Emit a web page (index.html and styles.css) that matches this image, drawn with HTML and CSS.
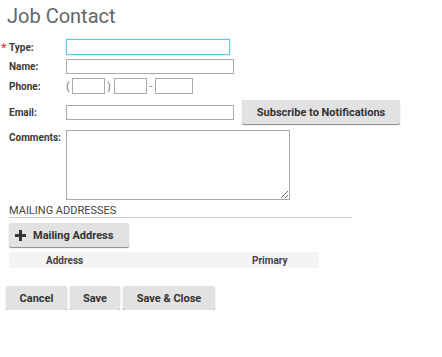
FILE: index.html
```html
<!DOCTYPE html>
<html lang="en">
<head>
  <meta charset="UTF-8" />
  <title>Job Contact</title>
  <link rel="stylesheet" href="styles.css">
</head>
<body>
  <div class="page">
    <h2 class="title">Job Contact</h2>

    <div class="form">
      <div class="row">
        <label class="required"><span class="star">*</span>Type:</label>
        <input type="text" class="field field-type focused" />
      </div>
      <div class="row">
        <label>Name:</label>
        <input type="text" class="field field-name" />
      </div>
      <div class="row">
        <label>Phone:</label>
        <div class="phone">
          <span class="paren">(</span>
          <input type="text" class="field box" />
          <span class="paren">)</span>
          <input type="text" class="field box" />
          <span class="dash">-</span>
          <input type="text" class="field box box-wide" />
        </div>
      </div>
      <div class="row row-email">
        <label>Email:</label>
        <input type="text" class="field field-name" />
        <button class="btn btn-subscribe">Subscribe to Notifications</button>
      </div>
      <div class="row row-comments">
        <label>Comments:</label>
        <textarea class="field comments"></textarea>
      </div>
    </div>

    <div class="section">
      <div class="section-title">MAILING ADDRESSES</div>
      <button class="btn btn-add">
        <svg width="11" height="11" viewBox="0 0 11 11"><path d="M4 0h3v4h4v3H7v4H4V7H0V4h4z" fill="#333"/></svg>
        Mailing Address
      </button>
      <div class="table-head">
        <span class="col-address">Address</span>
        <span class="col-primary">Primary</span>
      </div>
    </div>

    <div class="actions">
      <button class="btn btn-cancel">Cancel</button>
      <button class="btn btn-save">Save</button>
      <button class="btn btn-close">Save &amp; Close</button>
    </div>
  </div>
</body>
</html>
```

FILE: styles.css
```css
body {
  margin: 0;
  font-family: Roboto, "Liberation Sans", sans-serif;
  color: #333;
  background: #fff;
}
.page {
  padding: 4px 0 0 0;
}
.title {
  margin: 0 0 0 7px;
  font-size: 20px;
  font-weight: 400;
  color: #666;
  line-height: 24px;
}
.form {
  margin-top: 11px;
}
.row {
  display: flex;
  align-items: center;
  margin-bottom: 4px;
}
.row label {
  width: 57px;
  padding-left: 9px;
  font-size: 10px;
  font-weight: bold;
  color: #3a3a3a;
  position: relative;
}
.star {
  position: absolute;
  left: 1px;
  top: -2px;
  font-size: 13px;
  color: #d33;
  font-weight: normal;
}
.field {
  box-sizing: border-box;
  height: 16px;
  border: 1px solid #aaa;
  margin: 0;
  padding: 0 2px;
  font-family: inherit;
}
.field-type {
  width: 164px;
}
.focused {
  border-color: #5bc8e8;
  box-shadow: 0 0 2px #9fe0f4;
}
.field-name {
  width: 168px;
  height: 15px;
}
.phone {
  display: flex;
  align-items: center;
  font-size: 11px;
  color: #777;
}
.paren {
  width: 6px;
}
.box {
  width: 33px;
}
.box + .paren {
  width: 9px;
  padding-left: 2px;
  box-sizing: border-box;
}
.dash {
  width: 8px;
  text-align: center;
}
.box-wide {
  width: 38px;
}
.row-email {
  margin-top: 6px;
}
.btn {
  box-sizing: border-box;
  height: 24px;
  border: none;
  border-radius: 2px;
  background: #e2e2e2;
  box-shadow: 0 1px 1px #888;
  font-family: inherit;
  font-size: 11px;
  font-weight: bold;
  color: #333;
  padding: 0 12px;
  cursor: pointer;
}
.btn-subscribe {
  margin-left: 8px;
  width: 158px;
}
.row-comments {
  align-items: flex-start;
  margin-top: 6px;
}
.row-comments label {
  padding-top: 2px;
}
.comments {
  width: 224px;
  height: 70px;
  resize: both;
}
.section {
  margin: 3px 0 0 9px;
}
.section-title {
  font-size: 11px;
  color: #444;
  width: 343px;
  padding-bottom: 0;
  border-bottom: 1px solid #ccc;
}
.btn-add {
  margin-top: 5px;
  width: 120px;
  height: 24px;
  display: flex;
  align-items: center;
  gap: 7px;
  padding-left: 6px;
}
.table-head {
  margin-top: 5px;
  width: 310px;
  height: 16px;
  background: #f4f4f4;
  display: flex;
  align-items: center;
  font-size: 10px;
  font-weight: bold;
  color: #444;
}
.col-address {
  padding-left: 37px;
  width: 206px;
}
.actions {
  margin: 18px 0 0 6px;
  display: flex;
  gap: 3px;
}
.btn-cancel {
  width: 61px;
}
.btn-save {
  width: 50px;
}
.btn-close {
  width: 92px;
}
```
